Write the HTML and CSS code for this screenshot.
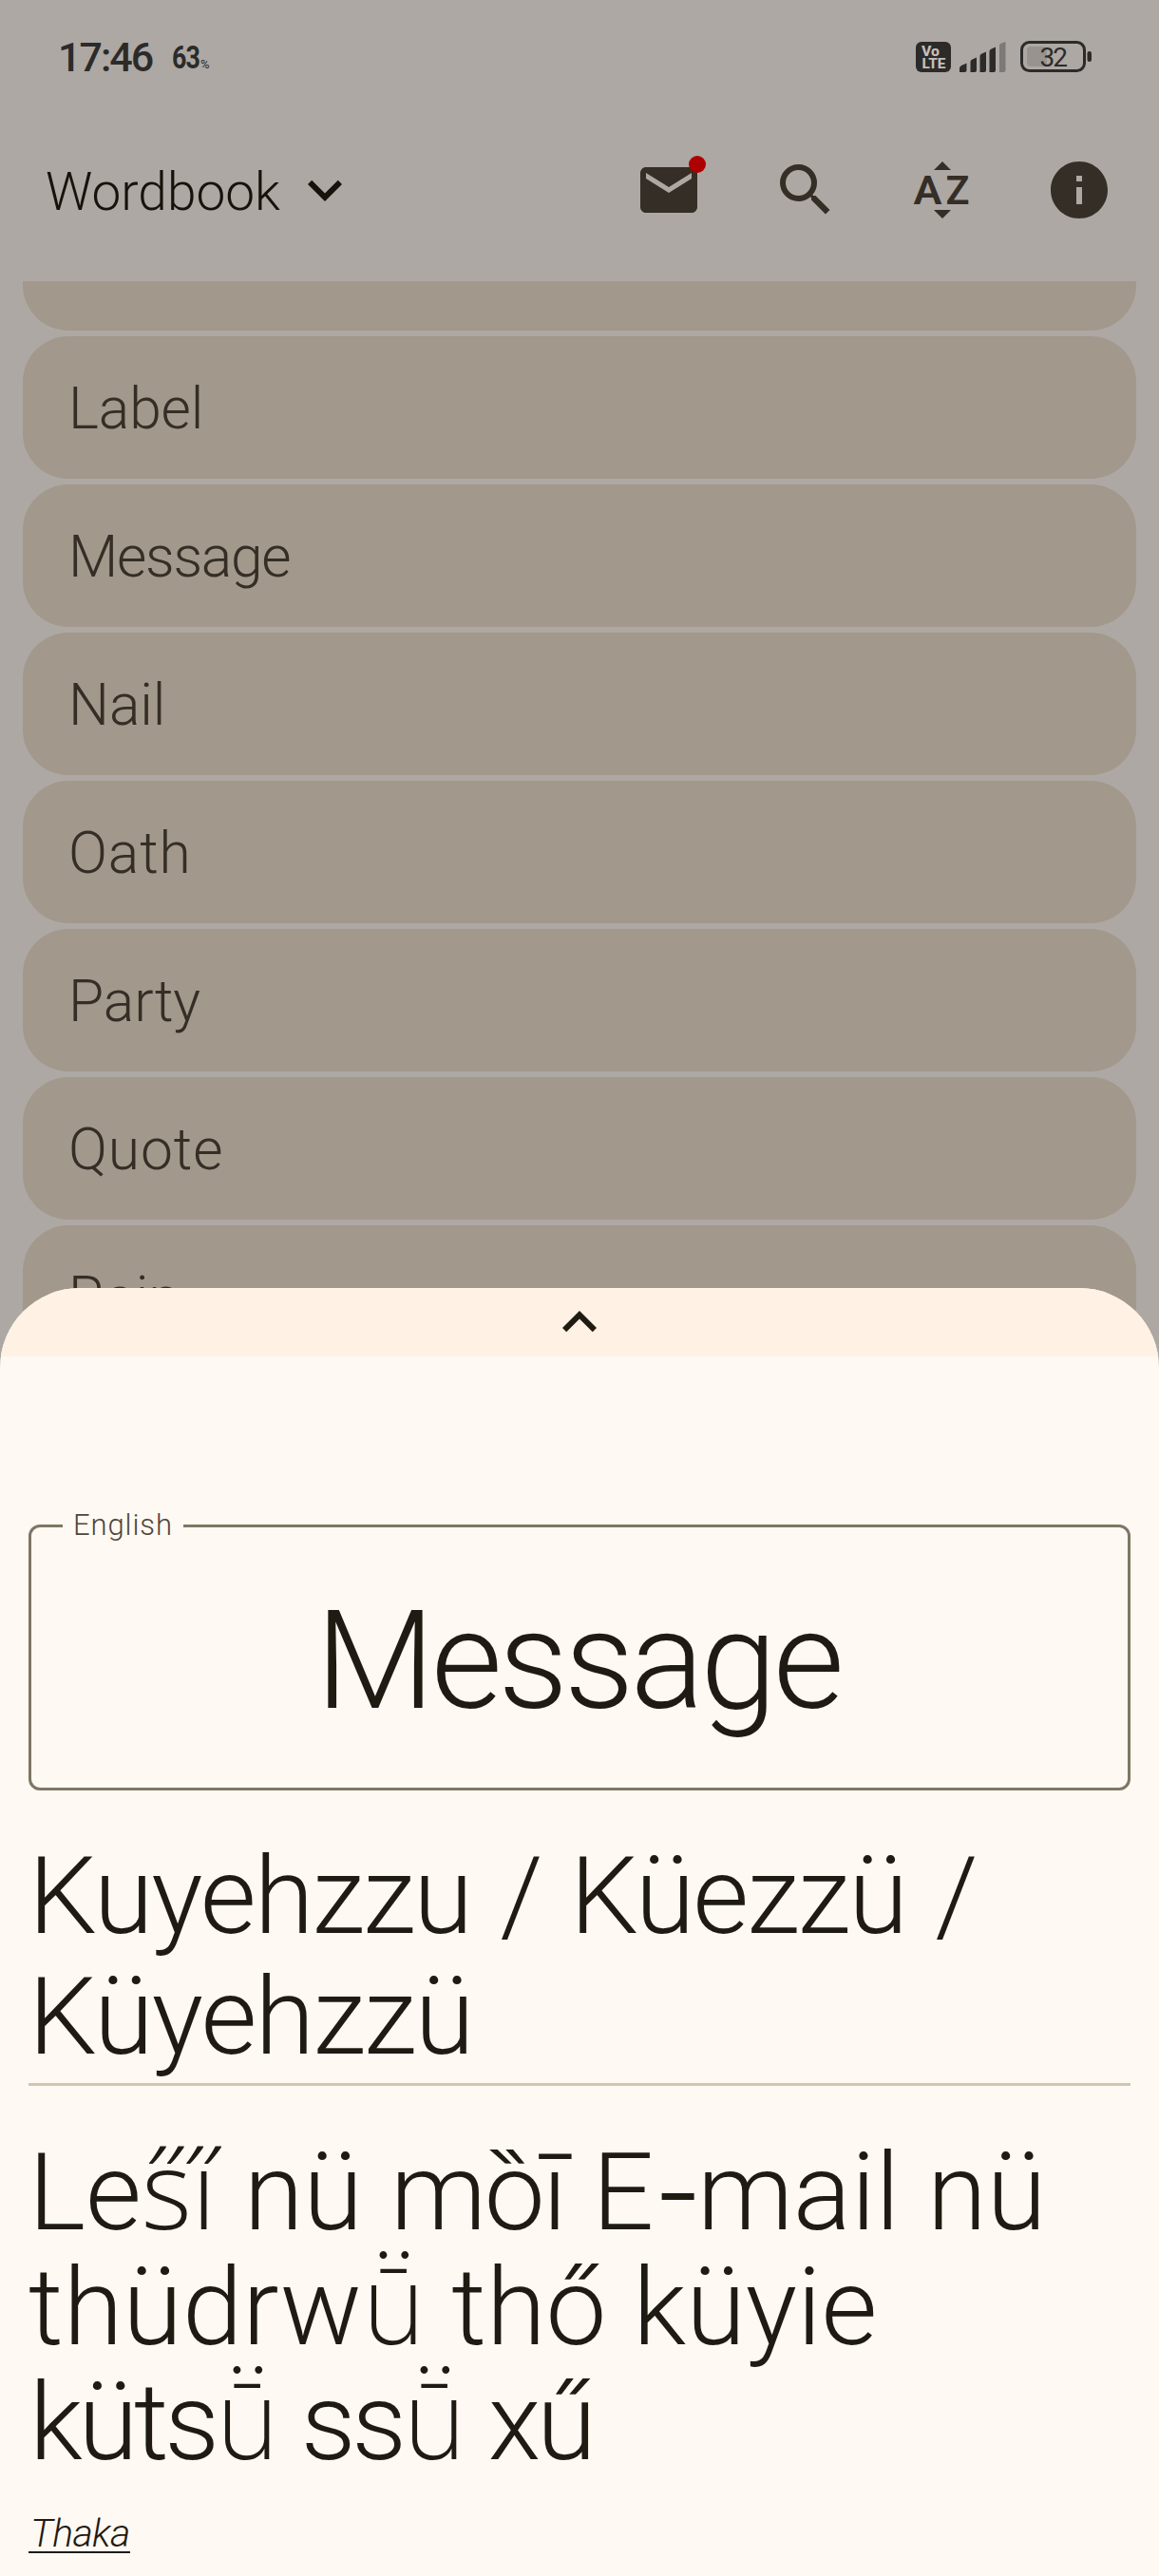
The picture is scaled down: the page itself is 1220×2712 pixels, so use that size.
FILE: index.html
```html
<!DOCTYPE html>
<html lang="en">
<head>
<meta charset="utf-8">
<title>Wordbook</title>
<link rel="stylesheet" href="styles.css">
</head>
<body>
<div class="screen">
  <header class="status">
    <span class="clock">17:46</span>
    <span class="pct">63</span><span class="pct-sign">%</span>
    <div class="status-icons">
      <svg class="volte" width="37" height="32" viewBox="0 0 37 32">
        <rect width="37" height="32" rx="6" fill="#2c2b29"/>
        <text x="6" y="15" textLength="19" lengthAdjust="spacingAndGlyphs">Vo</text>
        <text x="6.5" y="27.5" textLength="25" lengthAdjust="spacingAndGlyphs">LTE</text>
      </svg>
      <svg class="signal" width="49" height="32" viewBox="0 0 49 32" fill="#2c2b29">
        <path d="M0 32v-4q0-2 2-3l5.5-2.500V30q0 2-2 2z"/>
        <path d="M11.500 32V21q0-1.500 1.500-2.300l5-2.200V30q0 2-2 2z"/>
        <path d="M21.500 32V15q0-1.500 1.500-2.300l5-2.200V30q0 2-2 2z"/>
        <path d="M31.500 32V10q0-1.500 1.500-2.300l5-2.200V30q0 2-2 2z"/>
        <path d="M42 32V4q0-1.500 1.500-2.300L48.500 0V30q0 2-2 2z" fill="#7d7976"/>
      </svg>
      <svg class="battery" width="76" height="34" viewBox="0 0 76 34">
        <rect x="7" y="6" width="21" height="21" rx="4" fill="#98938f"/>
        <rect x="1.500" y="1.500" width="66" height="30" rx="8" fill="none" stroke="#2c2b29" stroke-width="3"/>
        <rect x="70.500" y="11" width="4.500" height="11" rx="2.200" fill="#2c2b29"/>
        <text x="20.500" y="26.500" textLength="29.500">32</text>
      </svg>
    </div>
  </header>

  <nav class="appbar">
    <h1 class="title">Wordbook</h1>
    <svg class="icon expand" viewBox="0 0 24 24"><path d="M7.410 8.590 12 13.170l4.590-4.580L18 10l-6 6-6-6z"/></svg>
    <div class="actions">
      <div class="mail">
        <svg class="icon" viewBox="0 0 24 24"><path d="M20 4H4c-1.100 0-2 .9-2 2v12c0 1.100.9 2 2 2h16c1.100 0 2-.9 2-2V6c0-1.100-.9-2-2-2zm0 4l-8 5-8-5V6l8 5 8-5z"/></svg>
        <i class="dot"></i>
      </div>
      <svg class="icon" viewBox="0 0 24 24"><path d="M15.500 14h-.79l-.28-.27A6.471 6.471 0 0 0 16 9.500 6.500 6.500 0 1 0 9.500 16c1.610 0 3.090-.59 4.230-1.570l.27.28v.79l5 4.990L20.490 19zm-6 0C7.010 14 5 11.990 5 9.500S7.010 5 9.500 5 14 7.010 14 9.500 11.990 14 9.500 14z"/></svg>
      <svg class="icon sort" viewBox="0 0 72 72"><path d="M27 15l9-9 9 9zM27 57l9 9 9-9z"/><text x="5.500" y="51" textLength="30" lengthAdjust="spacingAndGlyphs">A</text><text x="39.500" y="51" textLength="25" lengthAdjust="spacingAndGlyphs">Z</text></svg>
      <svg class="icon" viewBox="0 0 24 24"><path d="M12 2C6.480 2 2 6.480 2 12s4.480 10 10 10 10-4.480 10-10S17.520 2 12 2zm1 15h-2v-6h2zm0-8h-2V7h2z"/></svg>
    </div>
  </nav>

  <main class="list">
    <div class="card"></div>
    <div class="card">Label</div>
    <div class="card tight">Message</div>
    <div class="card">Nail</div>
    <div class="card wide">Oath</div>
    <div class="card">Party</div>
    <div class="card wide">Quote</div>
    <div class="card">Rain</div>
  </main>

  <section class="sheet">
    <div class="handle">
      <svg class="icon" viewBox="0 0 24 24"><path d="M12 8l-6 6 1.410 1.410L12 10.830l4.590 4.580L18 14z"/></svg>
    </div>
    <div class="content">
      <fieldset class="field">
        <legend>English</legend>
        <p class="word">Message</p>
      </fieldset>
      <p class="forms"><span class="line f1">Kuyehzzu / Küezzü /</span> <span class="line f2">Küyehzzü</span></p>
      <hr>
      <p class="meaning"><span class="line m1">Les̋i̋ nü <span class="close">mȍī</span> E<span class="dash">-</span>mail nü</span> <span class="line m2">thüdrw<span class="thin">ṻ</span> thő küyie</span> <span class="line m3">küts<span class="thin">ṻ</span> ss<span class="thin">ṻ</span> xű</span></p>
      <a class="source">Thaka</a>
    </div>
  </section>
</div>
</body>
</html>
```
FILE: styles.css
```css
* { box-sizing: border-box; }
body {
  margin: 0;
  font-family: Roboto, Inter, "Open Sans", sans-serif;
  font-weight: 300;
}
h1, p { margin: 0; font-weight: 300; }
.screen {
  position: relative;
  width: 1220px;
  height: 2712px;
  overflow: hidden;
  background: #ada8a4;
}

/* status bar */
.status {
  display: flex;
  height: 122px;
  padding: 0 70px 0 61px;
  line-height: 121px;
  color: #2c2b29;
  white-space: nowrap;
}
.clock { width: 120px; font-size: 43px; font-weight: 500; letter-spacing: -2px; }
.pct {
  width: 30px;
  font-size: 34px;
  font-weight: 700;
  letter-spacing: -1px;
  transform: scaleX(.79);
  transform-origin: 0 50%;
}
.pct-sign { font-size: 13px; font-weight: 400; padding-top: 7px; }
.status-icons { display: flex; align-items: flex-start; margin-left: auto; }
.volte { margin: 44px 9px 0 0; }
.volte text { font-size: 14px; font-weight: 800; fill: #c3beba; }
.signal { margin: 44px 15px 0 0; }
.battery { margin: 43px 0 0 0; }
.battery text { font-size: 28px; font-weight: 400; fill: #2c2b29; }

/* app bar */
.appbar {
  display: flex;
  align-items: center;
  height: 156px;
  padding: 0 48px;
  color: #17130b;
}
.title { width: 258px; padding-top: 4px; font-size: 55px; line-height: 70px; }
.icon { display: block; width: 72px; height: 72px; fill: currentColor; }
.actions { display: flex; gap: 72px; margin-left: auto; color: #352e26; }
.mail { position: relative; }
.dot {
  position: absolute;
  left: 57px;
  top: 0;
  width: 18px;
  height: 18px;
  border-radius: 50%;
  background: #ae0000;
}
.sort text { font-size: 42px; font-weight: 600; }

/* word list */
.list {
  display: flex;
  flex-direction: column;
  justify-content: flex-start;
  gap: 6px;
  height: 1300px;
  margin: 18px 24px 0;
  overflow: hidden;
}
.card {
  flex: none;
  height: 150px;
  padding: 3px 47px 0 48px;
  border-radius: 48px;
  background: #a2988b;
  color: #352e26;
  font-size: 60.5px;
  line-height: 147px;
  letter-spacing: -.1px;
}
.card:first-child { margin-top: -98px; }
.card.tight { letter-spacing: -1.3px; }
.card.wide { letter-spacing: .9px; }

/* bottom sheet */
.sheet {
  position: absolute;
  left: 0;
  right: 0;
  bottom: 0;
  height: 1356px;
  border-radius: 84px 84px 0 0;
  overflow: hidden;
  background: #fff9f3;
  color: #1f1b13;
}
.handle { display: flex; justify-content: center; height: 72px; background: #fff1e3; }
.content { padding: 159px 30px 0; }
.field {
  display: block;
  height: 298px;
  margin: 0;
  padding: 0 33px;
  border: 3px solid #7f7667;
  border-radius: 12px;
  min-width: 0;
}
.field legend {
  height: 38px;
  padding: 0 11px 0 11px;
  font-size: 31px;
  line-height: 38px;
  letter-spacing: .9px;
  color: #4d4639;
}
.word {
  padding: 38px 3px 0 0;
  font-size: 145px;
  line-height: 170px;
  letter-spacing: -4px;
  text-align: center;
}
.line { display: block; }
.forms { margin-top: 48px; font-size: 114px; line-height: 127px; white-space: nowrap; }
.f1 { letter-spacing: -2px; word-spacing: 4.6px; }
.f2 { letter-spacing: -1.8px; }
hr { height: 3px; margin: 6px 0 50px; border: 0; background: #d1c5b4; }
.meaning { font-size: 114px; line-height: 121px; white-space: nowrap; }
.m1 { letter-spacing: -.1px; word-spacing: 1.5px; }
.m2 { letter-spacing: 0; }
.m3 { padding-left: 1px; letter-spacing: -4.3px; word-spacing: 4px; }
.close { letter-spacing: -2.4px; }
.thin { font-weight: 200; }
.dash { font-family: Inter, sans-serif; font-size: 112px; letter-spacing: -5px; }
.source {
  display: block;
  width: 107px;
  height: 44px;
  margin-top: 33px;
  padding-left: 2px;
  border-bottom: 2.5px solid #1f1b13;
  font-size: 41px;
  font-style: italic;
  line-height: 47px;
  letter-spacing: -.6px;
  white-space: nowrap;
}
```
